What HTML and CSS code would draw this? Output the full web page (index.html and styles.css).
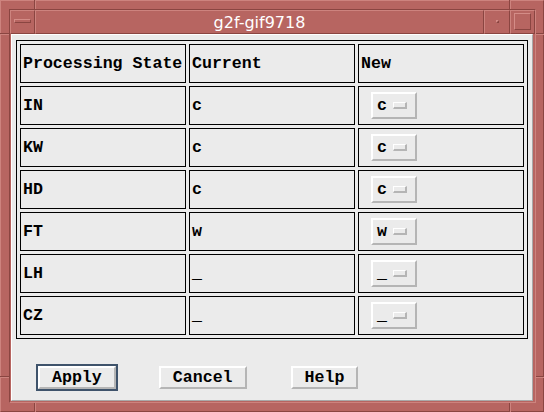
FILE: index.html
```html
<!DOCTYPE html>
<html>
<head>
<meta charset="utf-8">
<link rel="stylesheet" href="styles.css">
</head>
<body>
<div class="window">
  <div class="inner">
    <div class="titlebar">
      <div class="tb menu"><span class="menu-bar"></span></div>
      <div class="tb title">g2f-gif9718</div>
      <div class="tb min"><span class="min-dot"></span></div>
      <div class="tb max"><span class="max-sq"></span></div>
    </div>
    <div class="content">
      <div class="grid">
        <div class="cell">Processing State</div>
        <div class="cell">Current</div>
        <div class="cell">New</div>

        <div class="cell">IN</div>
        <div class="cell">c</div>
        <div class="cell"><div class="opt"><span class="opt-val">c</span><span class="ind"></span></div></div>

        <div class="cell">KW</div>
        <div class="cell">c</div>
        <div class="cell"><div class="opt"><span class="opt-val">c</span><span class="ind"></span></div></div>

        <div class="cell">HD</div>
        <div class="cell">c</div>
        <div class="cell"><div class="opt"><span class="opt-val">c</span><span class="ind"></span></div></div>

        <div class="cell">FT</div>
        <div class="cell">w</div>
        <div class="cell"><div class="opt"><span class="opt-val">w</span><span class="ind"></span></div></div>

        <div class="cell">LH</div>
        <div class="cell">_</div>
        <div class="cell"><div class="opt"><span class="opt-val">_</span><span class="ind"></span></div></div>

        <div class="cell">CZ</div>
        <div class="cell">_</div>
        <div class="cell"><div class="opt"><span class="opt-val">_</span><span class="ind"></span></div></div>
      </div>
      <div class="actions">
        <button class="btn default">Apply</button>
        <button class="btn">Cancel</button>
        <button class="btn help">Help</button>
      </div>
    </div>
  </div>
  <span class="mark vert top-left"></span>
  <span class="mark vert top-right"></span>
  <span class="mark vert bottom-left"></span>
  <span class="mark vert bottom-right"></span>
  <span class="mark horiz left-top"></span>
  <span class="mark horiz right-top"></span>
  <span class="mark horiz left-bottom"></span>
  <span class="mark horiz right-bottom"></span>
</div>
</body>
</html>
```

FILE: styles.css
```css
html, body {
  margin: 0;
  padding: 0;
  background: #b76561;
}

.window {
  position: relative;
  width: 544px;
  height: 412px;
  box-sizing: border-box;
  background: #b76561;
  border-top: 1px solid #cd837e;
  border-left: 1px solid #cd837e;
  border-right: 1px solid #8a4541;
  border-bottom: 1px solid #8a4541;
  padding: 8px 7px 8px 8px;
}

.inner {
  box-sizing: border-box;
  width: 527px;
  height: 394px;
  border-top: 1px solid #8a4541;
  border-left: 1px solid #8a4541;
  border-right: 1px solid #cd837e;
  border-bottom: 1px solid #cd837e;
  display: flex;
  flex-direction: column;
}

.titlebar {
  display: flex;
  height: 24px;
  flex: none;
}

.tb {
  box-sizing: border-box;
  height: 24px;
  border-top: 1px solid #cd837e;
  border-left: 1px solid #cd837e;
  border-right: 1px solid #8a4541;
  border-bottom: 1px solid #8a4541;
  display: flex;
  align-items: center;
  justify-content: center;
}

.menu { width: 25px; }
.title {
  width: 449px;
  color: #ffffff;
  font-family: "DejaVu Sans", sans-serif;
  font-size: 16px;
  line-height: 22px;
  padding-top: 1px;
  align-items: flex-start;
}
.min { width: 26px; }
.max { width: 25px; }

.menu-bar {
  width: 17px;
  height: 4px;
  box-sizing: border-box;
  border-top: 1px solid #d48c87;
  border-left: 1px solid #d48c87;
  border-right: 1px solid #8a4541;
  border-bottom: 1px solid #8a4541;
  margin-top: -2px;
}

.min-dot {
  width: 3px;
  height: 3px;
  box-sizing: border-box;
  border-top: 1px solid #d48c87;
  border-left: 1px solid #d48c87;
  border-right: 1px solid #8a4541;
  border-bottom: 1px solid #8a4541;
  margin-top: -2px;
}

.max-sq {
  width: 17px;
  height: 17px;
  box-sizing: border-box;
  border-top: 1px solid #d48c87;
  border-left: 1px solid #d48c87;
  border-right: 1px solid #8a4541;
  border-bottom: 1px solid #8a4541;
  margin-top: -1px;
}

.content {
  box-sizing: border-box;
  width: 522px;
  height: 367px;
  margin: 0 2px 1px 1px;
  background: #ebebeb;
  border-top: 1px solid #ffffff;
  border-left: 1px solid #ffffff;
  border-right: 1px solid #a9a9a9;
  border-bottom: 1px solid #a9a9a9;
  padding: 5px 4px 0 4px;
  font-family: "Liberation Mono", "Courier New", monospace;
  font-weight: bold;
  font-size: 16.6px;
  color: #000;
}

.grid {
  display: grid;
  grid-template-columns: repeat(3, 166px);
  grid-auto-rows: 39px;
  gap: 3px;
  padding: 3px;
  border: 1px solid #000;
  width: max-content;
}

.cell {
  box-sizing: border-box;
  border: 1px solid #000;
  display: flex;
  align-items: center;
  padding-left: 2px;
  white-space: pre;
}

.opt {
  box-sizing: border-box;
  width: 46px;
  height: 27px;
  margin-left: 10px;
  border-top: 2px solid #ffffff;
  border-left: 2px solid #ffffff;
  border-right: 2px solid #b5b5b5;
  border-bottom: 2px solid #b5b5b5;
  display: flex;
  align-items: center;
  padding-left: 4px;
  gap: 6px;
}

.opt-val {
  width: 10px;
}

.ind {
  box-sizing: border-box;
  width: 14px;
  height: 7px;
  border-top: 1px solid #ffffff;
  border-left: 1px solid #ffffff;
  border-right: 2px solid #b5b5b5;
  border-bottom: 2px solid #b5b5b5;
  margin-top: -1px;
}

.actions {
  display: flex;
  margin-top: 27px;
  padding-left: 22px;
  gap: 43px;
}

.btn {
  box-sizing: border-box;
  height: 23px;
  padding: 0 12px;
  margin: 0;
  background: #ebebeb;
  border-top: 2px solid #ffffff;
  border-left: 2px solid #ffffff;
  border-right: 2px solid #b5b5b5;
  border-bottom: 2px solid #b5b5b5;
  font-family: "Liberation Mono", "Courier New", monospace;
  font-weight: bold;
  font-size: 16.6px;
  line-height: 19px;
  color: #000;
}

.btn.default {
  outline: 2px solid #3f536b;
}

.btn.help {
  margin-left: 1px;
}

.mark {
  position: absolute;
  box-sizing: border-box;
}

.mark.vert {
  width: 2px;
  height: 9px;
  border-left: 1px solid #8a4541;
  border-right: 1px solid #cd837e;
}

.mark.horiz {
  width: 9px;
  height: 2px;
  border-top: 1px solid #8a4541;
  border-bottom: 1px solid #cd837e;
}

.top-left { left: 33px; top: -1px; }
.top-right { left: 508px; top: -1px; }
.bottom-left { left: 33px; top: 402px; }
.bottom-right { left: 508px; top: 402px; }
.left-top { left: -1px; top: 32px; }
.right-top { left: 535px; top: 32px; }
.left-bottom { left: -1px; top: 375px; }
.right-bottom { left: 535px; top: 375px; }
```
